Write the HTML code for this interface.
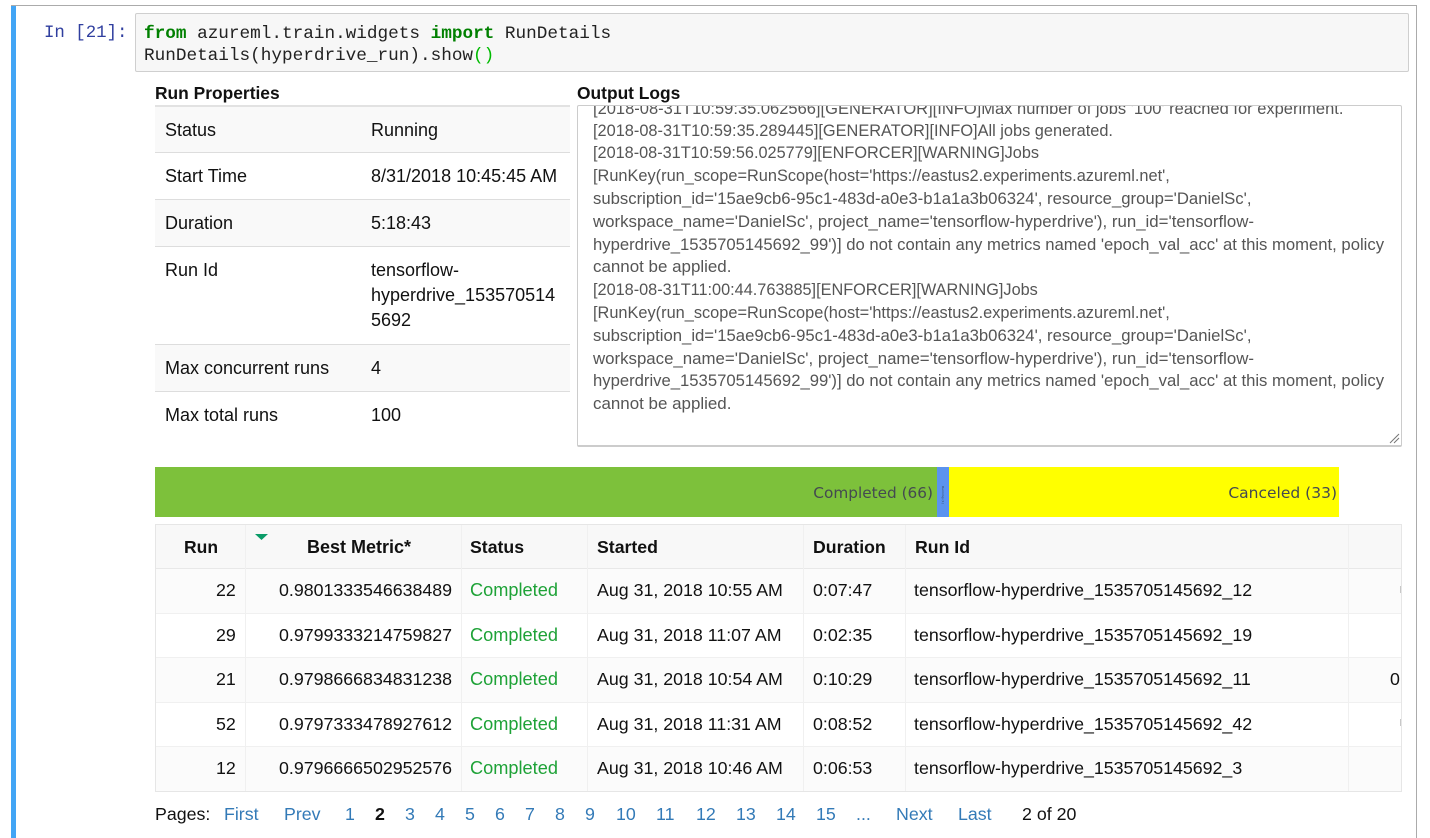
<!DOCTYPE html>
<html><head><meta charset="utf-8"><style>
html,body{margin:0;padding:0;width:1430px;height:838px;overflow:hidden;background:#fff}
body{position:relative;font-family:"Liberation Sans",sans-serif;color:#000}
.a{position:absolute}
.t{position:absolute;white-space:nowrap;line-height:24px;font-size:17.8px;color:#111}
.m{font-family:"Liberation Mono",monospace;font-size:17.7px;color:#222;line-height:22px}
.k{color:#008000;font-weight:bold}
.b{font-weight:bold}
.l{position:absolute;left:593px;white-space:nowrap;font-size:16.35px;line-height:22px;color:#555}
.r{text-align:right}
.h{font-weight:bold;font-size:17.7px}
.g{color:#1ea237;font-size:18.2px}
.p{color:#337ab7}
.v{font-size:18px}
</style></head><body>
<div class="a" style="left:11px;top:5px;width:1406px;height:840px;border-top:1px solid #ababab;border-right:1px solid #ababab;box-sizing:border-box"></div>
<div class="a" style="left:11px;top:6px;width:5px;height:832px;background:#42a5f5"></div>

<div class="t m" style="left:44px;top:23px;color:#303f9f;font-size:17.4px">In [21]:</div>
<div class="a" style="left:135px;top:13px;width:1274px;height:59px;background:#f7f7f7;border:1px solid #cfcfcf;box-sizing:border-box;border-radius:2px"></div>
<div class="t m" style="left:144px;top:23px"><span class="k">from</span> azureml.train.widgets <span class="k">import</span> RunDetails</div>
<div class="t m" style="left:144px;top:45px">RunDetails(hyperdrive_run).show<span style="color:#0b0">()</span></div>

<div class="t b" style="left:155px;top:81px;font-size:17.4px">Run Properties</div>
<div class="t b" style="left:577px;top:81px;font-size:17.4px">Output Logs</div>

<!-- properties -->
<div class="a" style="left:155px;top:105px;width:415px;height:2px;background:#e2e2e2"></div>
<div class="a" style="left:155px;top:107px;width:415px;height:46px;background:#f9f9f9"></div>
<div class="a" style="left:155px;top:200px;width:415px;height:47px;background:#f9f9f9"></div>
<div class="a" style="left:155px;top:345px;width:415px;height:46px;background:#f9f9f9"></div>
<div class="a" style="left:155px;top:152px;width:415px;height:1px;background:#ddd"></div>
<div class="a" style="left:155px;top:199px;width:415px;height:1px;background:#ddd"></div>
<div class="a" style="left:155px;top:246px;width:415px;height:1px;background:#ddd"></div>
<div class="a" style="left:155px;top:344px;width:415px;height:1px;background:#ddd"></div>
<div class="a" style="left:155px;top:391px;width:415px;height:1px;background:#ddd"></div>
<div class="t v" style="left:165px;top:118px">Status</div><div class="t v" style="left:371px;top:118px">Running</div>
<div class="t v" style="left:165px;top:164px">Start Time</div><div class="t v" style="left:371px;top:164px">8/31/2018 10:45:45 AM</div>
<div class="t v" style="left:165px;top:211px">Duration</div><div class="t v" style="left:371px;top:211px">5:18:43</div>
<div class="t v" style="left:165px;top:258px">Run Id</div>
<div class="t v" style="left:371px;top:258px">tensorflow-</div>
<div class="t v" style="left:371px;top:283px">hyperdrive_153570514</div>
<div class="t v" style="left:371px;top:308px">5692</div>
<div class="t v" style="left:165px;top:356px">Max concurrent runs</div><div class="t v" style="left:371px;top:356px">4</div>
<div class="t v" style="left:165px;top:403px">Max total runs</div><div class="t v" style="left:371px;top:403px">100</div>

<!-- logs -->
<div class="a" style="left:577px;top:105px;width:825px;height:342px;border:1px solid #ccc;border-bottom:2px solid #ccc;box-sizing:border-box;border-radius:2px;overflow:hidden;background:#fff">
<div class="l" style="left:15px;top:-8px;font-size:16.5px">[2018-08-31T10:59:35.062566][GENERATOR][INFO]Max number of jobs '100' reached for experiment.</div>
<div class="l" style="left:15px;top:14px;font-size:16.35px">[2018-08-31T10:59:35.289445][GENERATOR][INFO]All jobs generated.</div>
<div class="l" style="left:15px;top:36px;font-size:16.28px">[2018-08-31T10:59:56.025779][ENFORCER][WARNING]Jobs</div>
<div class="l" style="left:15px;top:59px;font-size:16.35px">[RunKey(run_scope=RunScope(host='https://eastus2.experiments.azureml.net',</div>
<div class="l" style="left:15px;top:82px;font-size:16.7px">subscription_id='15ae9cb6-95c1-483d-a0e3-b1a1a3b06324', resource_group='DanielSc',</div>
<div class="l" style="left:15px;top:105px;font-size:16.84px">workspace_name='DanielSc', project_name='tensorflow-hyperdrive'), run_id='tensorflow-</div>
<div class="l" style="left:15px;top:128px;font-size:16.67px">hyperdrive_1535705145692_99')] do not contain any metrics named 'epoch_val_acc' at this moment, policy</div>
<div class="l" style="left:15px;top:150px;font-size:16.95px">cannot be applied.</div>
<div class="l" style="left:15px;top:173px;font-size:16.28px">[2018-08-31T11:00:44.763885][ENFORCER][WARNING]Jobs</div>
<div class="l" style="left:15px;top:196px;font-size:16.35px">[RunKey(run_scope=RunScope(host='https://eastus2.experiments.azureml.net',</div>
<div class="l" style="left:15px;top:219px;font-size:16.7px">subscription_id='15ae9cb6-95c1-483d-a0e3-b1a1a3b06324', resource_group='DanielSc',</div>
<div class="l" style="left:15px;top:242px;font-size:16.84px">workspace_name='DanielSc', project_name='tensorflow-hyperdrive'), run_id='tensorflow-</div>
<div class="l" style="left:15px;top:264px;font-size:16.67px">hyperdrive_1535705145692_99')] do not contain any metrics named 'epoch_val_acc' at this moment, policy</div>
<div class="l" style="left:15px;top:287px;font-size:16.95px">cannot be applied.</div>
<svg class="a" style="left:811px;top:327px" width="12" height="12"><path d="M1 10L10 1M5 10L10 5" stroke="#777" stroke-width="1" fill="none"/></svg>
</div>

<!-- status bar -->
<div class="a" style="left:155px;top:467px;width:782px;height:50px;background:#7dc13b"></div>
<div class="a" style="left:937px;top:467px;width:12px;height:50px;background:#5b93ef"></div>
<div class="a" style="left:949px;top:467px;width:390px;height:50px;background:#ff0"></div>
<div class="t" style="right:497px;top:481px;font-family:'DejaVu Sans',sans-serif;font-size:15.3px;color:#444a50">Completed (66)</div>
<div class="t" style="right:93px;top:481px;font-family:'DejaVu Sans',sans-serif;font-size:15.5px;color:#444a50">Canceled (33)</div>
<div class="a" style="left:943px;top:492px;width:30px;height:6px;font-size:3px;line-height:6px;color:#345;white-space:nowrap;transform:translate(-15px,0) rotate(90deg);text-align:center;font-family:'DejaVu Sans',sans-serif">Running (1)</div>

<!-- runs table -->
<div class="a" style="left:155px;top:524px;width:1247px;height:268px;border:1px solid #e6e6e6;box-sizing:border-box;overflow:hidden;background:#fff">
 <div class="a" style="left:0;top:0;width:1245px;height:44px;background:#f8f8f8"></div>
 <div class="a" style="left:0;top:44px;width:1245px;height:44px;background:#fbfbfb"></div>
 <div class="a" style="left:0;top:132px;width:1245px;height:45px;background:#fbfbfb"></div>
 <div class="a" style="left:0;top:221px;width:1245px;height:45px;background:#fbfbfb"></div>
 <div class="a" style="left:0;top:43px;width:1245px;height:1px;background:#e8e8e8"></div>
 <div class="a" style="left:0;top:88px;width:1245px;height:1px;background:#f0f0f0"></div>
 <div class="a" style="left:0;top:132px;width:1245px;height:1px;background:#f0f0f0"></div>
 <div class="a" style="left:0;top:177px;width:1245px;height:1px;background:#f0f0f0"></div>
 <div class="a" style="left:0;top:221px;width:1245px;height:1px;background:#f0f0f0"></div>
 <div class="a" style="left:89px;top:0;width:1px;height:268px;background:#f0f0f0"></div>
 <div class="a" style="left:305px;top:0;width:1px;height:268px;background:#f0f0f0"></div>
 <div class="a" style="left:431px;top:0;width:1px;height:268px;background:#f0f0f0"></div>
 <div class="a" style="left:647px;top:0;width:1px;height:268px;background:#f0f0f0"></div>
 <div class="a" style="left:749px;top:0;width:1px;height:268px;background:#f0f0f0"></div>
 <div class="a" style="left:1192px;top:0;width:1px;height:268px;background:#f0f0f0"></div>
 <div class="a" style="left:1244px;top:61px;width:1px;height:7px;background:#c8c8c8"></div>
 <div class="a" style="left:1244px;top:194px;width:1px;height:7px;background:#c8c8c8"></div>
</div>
<svg class="a" style="left:255px;top:534px" width="13" height="7"><path d="M0 0H13L6.5 6Z" fill="#0a9c68"/></svg>

<div class="t h" style="left:184px;top:535px;font-size:17.5px">Run</div>
<div class="t h" style="left:307px;top:535px;font-size:18px">Best Metric*</div>
<div class="t h" style="left:470px;top:535px">Status</div>
<div class="t h" style="left:597px;top:535px">Started</div>
<div class="t h" style="left:813px;top:535px">Duration</div>
<div class="t h" style="left:915px;top:535px">Run Id</div>

<div class="t" style="left:216px;top:578px">22</div><div class="t" style="left:279px;top:578px">0.9801333546638489</div><div class="t g" style="left:470px;top:578px">Completed</div><div class="t" style="left:597px;top:578px">Aug 31, 2018 10:55 AM</div><div class="t" style="left:813px;top:578px">0:07:47</div><div class="t" style="left:914px;top:578px">tensorflow-hyperdrive_1535705145692_12</div>
<div class="t" style="left:216px;top:623px">29</div><div class="t" style="left:279px;top:623px">0.9799333214759827</div><div class="t g" style="left:470px;top:623px">Completed</div><div class="t" style="left:597px;top:623px">Aug 31, 2018 11:07 AM</div><div class="t" style="left:813px;top:623px">0:02:35</div><div class="t" style="left:914px;top:623px">tensorflow-hyperdrive_1535705145692_19</div>
<div class="t" style="left:216px;top:667px">21</div><div class="t" style="left:279px;top:667px">0.9798666834831238</div><div class="t g" style="left:470px;top:667px">Completed</div><div class="t" style="left:597px;top:667px">Aug 31, 2018 10:54 AM</div><div class="t" style="left:813px;top:667px">0:10:29</div><div class="t" style="left:914px;top:667px">tensorflow-hyperdrive_1535705145692_11</div><div class="t" style="left:1390px;top:667px">0</div>
<div class="t" style="left:216px;top:712px">52</div><div class="t" style="left:279px;top:712px">0.9797333478927612</div><div class="t g" style="left:470px;top:712px">Completed</div><div class="t" style="left:597px;top:712px">Aug 31, 2018 11:31 AM</div><div class="t" style="left:813px;top:712px">0:08:52</div><div class="t" style="left:914px;top:712px">tensorflow-hyperdrive_1535705145692_42</div>
<div class="t" style="left:216px;top:756px">12</div><div class="t" style="left:279px;top:756px">0.9796666502952576</div><div class="t g" style="left:470px;top:756px">Completed</div><div class="t" style="left:597px;top:756px">Aug 31, 2018 10:46 AM</div><div class="t" style="left:813px;top:756px">0:06:53</div><div class="t" style="left:914px;top:756px">tensorflow-hyperdrive_1535705145692_3</div>

<!-- pagination -->
<div class="t" style="left:155px;top:802px">Pages:</div>
<div class="t p" style="left:224px;top:802px">First</div>
<div class="t p" style="left:284px;top:802px">Prev</div>
<div class="t p" style="left:345px;top:802px">1</div>
<div class="t b" style="left:375px;top:802px">2</div>
<div class="t p" style="left:405px;top:802px">3</div>
<div class="t p" style="left:435px;top:802px">4</div>
<div class="t p" style="left:465px;top:802px">5</div>
<div class="t p" style="left:495px;top:802px">6</div>
<div class="t p" style="left:525px;top:802px">7</div>
<div class="t p" style="left:555px;top:802px">8</div>
<div class="t p" style="left:585px;top:802px">9</div>
<div class="t p" style="left:616px;top:802px">10</div>
<div class="t p" style="left:656px;top:802px">11</div>
<div class="t p" style="left:696px;top:802px">12</div>
<div class="t p" style="left:736px;top:802px">13</div>
<div class="t p" style="left:776px;top:802px">14</div>
<div class="t p" style="left:816px;top:802px">15</div>
<div class="t p" style="left:856px;top:802px">...</div>
<div class="t p" style="left:896px;top:802px">Next</div>
<div class="t p" style="left:958px;top:802px">Last</div>
<div class="t" style="left:1022px;top:802px">2 of 20</div>
</body></html>
